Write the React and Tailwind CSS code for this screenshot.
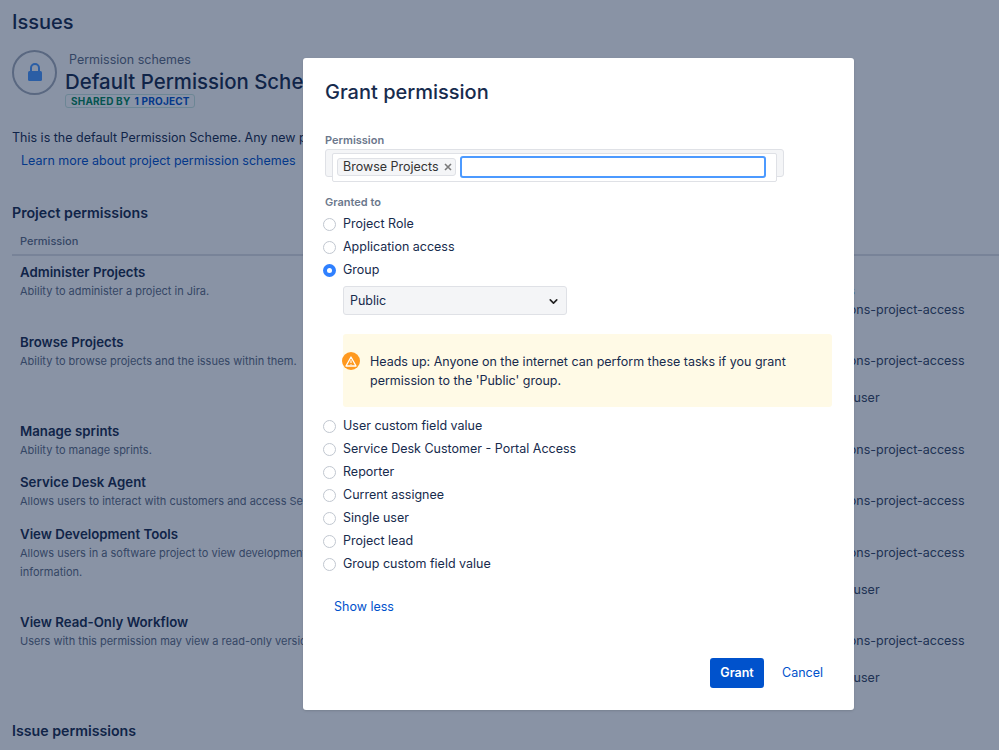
import { ChevronDown } from 'lucide-react';

const PERMISSION_ROWS = [
  {
    title: 'Administer Projects',
    desc: 'Ability to administer a project in Jira.',
    height: 'h-[70px]',
    grants: [
      { label: 'Project Role', lines: ['Administrators', 'atlassian-addons-project-access'] },
    ],
  },
  {
    title: 'Browse Projects',
    desc: 'Ability to browse projects and the issues within them.',
    height: 'h-[89px]',
    grants: [
      { label: 'Project Role', lines: ['atlassian-addons-project-access'] },
      { label: 'Application', lines: ['Any logged in user'] },
    ],
  },
  {
    title: 'Manage sprints',
    desc: 'Ability to manage sprints.',
    height: 'h-[51px]',
    grants: [{ label: 'Project Role', lines: ['atlassian-addons-project-access'] }],
  },
  {
    title: 'Service Desk Agent',
    desc: 'Allows users to interact with customers and access Service Desk.',
    height: 'h-[52px]',
    grants: [{ label: 'Project Role', lines: ['atlassian-addons-project-access'] }],
  },
  {
    title: 'View Development Tools',
    desc: 'Allows users in a software project to view development-related information.',
    height: 'h-[88px]',
    grants: [
      { label: 'Project Role', lines: ['atlassian-addons-project-access'] },
      { label: 'Application', lines: ['Any logged in user'] },
    ],
  },
  {
    title: 'View Read-Only Workflow',
    desc: 'Users with this permission may view a read-only version.',
    height: 'h-[90px]',
    grants: [
      { label: 'Project Role', lines: ['atlassian-addons-project-access'] },
      { label: 'Application', lines: ['Any logged in user'] },
    ],
  },
];

const TOP_OPTIONS = ['Project Role', 'Application access'];
const BOTTOM_OPTIONS = [
  'User custom field value',
  'Service Desk Customer - Portal Access',
  'Reporter',
  'Current assignee',
  'Single user',
  'Project lead',
  'Group custom field value',
];

function Radio({ label, checked }) {
  return (
    <div className="flex h-[23px] items-center">
      {checked ? (
        <span className="flex h-[13px] w-[13px] items-center justify-center rounded-full bg-[#2f80ff]">
          <span className="h-[5px] w-[5px] rounded-full bg-white" />
        </span>
      ) : (
        <span className="h-[13px] w-[13px] rounded-full border border-[#c1c7d0] bg-white" />
      )}
      <span className="ml-[7px] text-[12.5px] text-[#172b4d]">{label}</span>
    </div>
  );
}

function PermissionRow({ row }) {
  return (
    <div className={`flex ${row.height}`}>
      <div className="w-[350px] shrink-0 pt-[7px] pl-2">
        <div className="text-[13.25px] leading-[19px] font-semibold text-[#172b4d]">{row.title}</div>
        <div className="text-[11px] leading-[19px] text-[#5e6c84]">{row.desc}</div>
      </div>
      <div className="ml-[407px] pt-[7.4px] text-[12.5px] leading-[18.6px] whitespace-nowrap text-[#344563]">
        {row.grants.map((grant) => (
          <div key={grant.label}>
            <div>{grant.label}</div>
            {grant.lines.map((line) => (
              <div key={line}>{line}</div>
            ))}
          </div>
        ))}
      </div>
    </div>
  );
}

export default function App() {
  return (
    <div
      className="relative h-[750px] w-[999px] overflow-hidden bg-white"
      style={{ fontFamily: 'Inter, "Liberation Sans", sans-serif' }}
    >
      <div className="pl-3">
        <h1 className="pt-[9px] text-[20px] leading-[27px] font-medium text-[#172b4d]">Issues</h1>

        <div className="mt-[14px] flex">
          <div className="flex h-[45px] w-[45px] items-center justify-center rounded-full border-2 border-[#a5adba]">
            <svg width="14" height="19" viewBox="0 0 14 19" fill="none">
              <path d="M3 9V5a4 4 0 0 1 8 0V9" stroke="#4c9aff" strokeWidth="2" />
              <rect x="0" y="8" width="14" height="10" rx="1.5" fill="#4c9aff" />
            </svg>
          </div>
          <div className="ml-2 pt-[1px]">
            <div className="pl-1 text-[12.5px] leading-[18px] text-[#5e6c84]">Permission schemes</div>
            <div className="text-[20.4px] leading-[25px] font-medium whitespace-nowrap text-[#172b4d]">
              Default Permission Scheme
            </div>
            <div className="flex h-[14px] w-[130px] items-center rounded-[3px] border border-[#c8e6e0] pl-[5px] text-[10px] font-bold tracking-[0.2px] whitespace-nowrap">
              <span className="text-[#00875a]">SHARED BY</span>
              <span className="ml-1 text-[#0052cc]">1 PROJECT</span>
            </div>
          </div>
        </div>

        <p className="mt-[20px] text-[12.5px] leading-[19px] whitespace-nowrap text-[#172b4d]">
          This is the default Permission Scheme. Any new project created will be assigned this scheme.
        </p>
        <a className="mt-[4px] ml-[9px] block text-[12.5px] leading-[19px] text-[#0052cc]">
          Learn more about project permission schemes
        </a>

        <h2 className="mt-[32px] text-[14.2px] leading-[21px] font-semibold text-[#172b4d]">Project permissions</h2>

        <div className="mt-[6px] flex h-[27px] items-center border-b-2 border-[#dfe1e6] pl-2 text-[11px] font-medium text-[#5e6c84]">
          Permission
        </div>

        {PERMISSION_ROWS.map((row) => (
          <PermissionRow key={row.title} row={row} />
        ))}

        <h2 className="mt-[24px] text-[14.2px] leading-[21px] font-semibold text-[#172b4d]">Issue permissions</h2>
      </div>

      <div className="absolute inset-0 bg-[#091e42]/[0.48]" />

      <div className="absolute top-[58px] left-[303px] flex h-[652px] w-[551px] flex-col rounded-[3px] bg-white px-[22px] shadow-sm">
        <h2 className="pt-[20px] text-[20px] leading-[28px] font-medium text-[#172b4d]">Grant permission</h2>

        <label className="mt-[27px] text-[11px] leading-[14px] font-semibold text-[#6b778c]">Permission</label>
        <div className="relative mt-[2px] h-[28px] w-[459px] rounded-[3px] border border-[#dfe1e6] bg-[#f4f5f7]">
          <div className="absolute top-[3px] left-[6px] flex h-[29px] w-[445px] items-center rounded-[2px] border border-[#dfe1e6] bg-white pb-[1px] pl-[4px]">
            <div className="flex h-[18px] w-[119px] items-center rounded-[3px] border border-[#dfe1e6] bg-[#f4f5f7] pl-[5px] text-[12.5px] whitespace-nowrap text-[#333]">
              Browse Projects
              <svg className="ml-[5px]" width="8" height="8" viewBox="0 0 8 8">
                <path d="M1 1l6 6M7 1L1 7" stroke="#7a7a7a" strokeWidth="1.6" />
              </svg>
            </div>
            <div className="ml-[4px] h-[22px] w-[306px] rounded-[3px] border-2 border-[#4c9aff] bg-white" />
          </div>
        </div>

        <label className="mt-[18px] text-[11px] leading-[14px] font-semibold text-[#6b778c]">Granted to</label>
        <div className="mt-[4px] -ml-[2px]">
          {TOP_OPTIONS.map((option) => (
            <Radio key={option} label={option} />
          ))}
          <Radio label="Group" checked />
        </div>

        <div className="mt-[4px] ml-[18px] flex h-[29px] w-[224px] shrink-0 items-center justify-between rounded-[3px] border border-[#dfe1e6] bg-[#f4f5f7] pt-[1px] pr-[6px] pl-[6px] text-[12.5px] text-[#172b4d]">
          Public
          <ChevronDown size={13} strokeWidth={3} className="text-[#222]" />
        </div>

        <div className="mt-[19px] ml-[18px] flex h-[73px] w-[489px] shrink-0 items-start rounded-[3px] bg-[#fffae6] pt-[18px] pr-[30px]">
          <div className="-ml-[1px] flex h-[18px] w-[18px] shrink-0 items-center justify-center rounded-full bg-[#ff991f]">
            <svg width="12" height="11" viewBox="0 0 12 11" fill="none">
              <path d="M6 1L11 10H1L6 1Z" stroke="#fff" strokeWidth="1.3" strokeLinejoin="round" />
              <path d="M6 4.2V7M6 8V8.8" stroke="#fff" strokeWidth="1.1" />
            </svg>
          </div>
          <p className="ml-[10px] text-[12.5px] leading-[19px] text-[#172b4d]">
            Heads up: Anyone on the internet can perform these tasks if you grant permission to the 'Public' group.
          </p>
        </div>

        <div className="mt-[8px] -ml-[2px]">
          {BOTTOM_OPTIONS.map((option) => (
            <Radio key={option} label={option} />
          ))}
        </div>

        <a className="mt-[21px] ml-[9px] text-[12.5px] leading-[19px] text-[#0052cc]">Show less</a>

        <div className="mt-[42px] flex items-center justify-end">
          <button className="h-[30px] w-[54px] rounded-[3px] bg-[#0052cc] text-[12.5px] font-semibold text-white">
            Grant
          </button>
          <a className="mr-[9px] ml-[18px] text-[12.5px] text-[#0052cc]">Cancel</a>
        </div>
      </div>
    </div>
  );
}
